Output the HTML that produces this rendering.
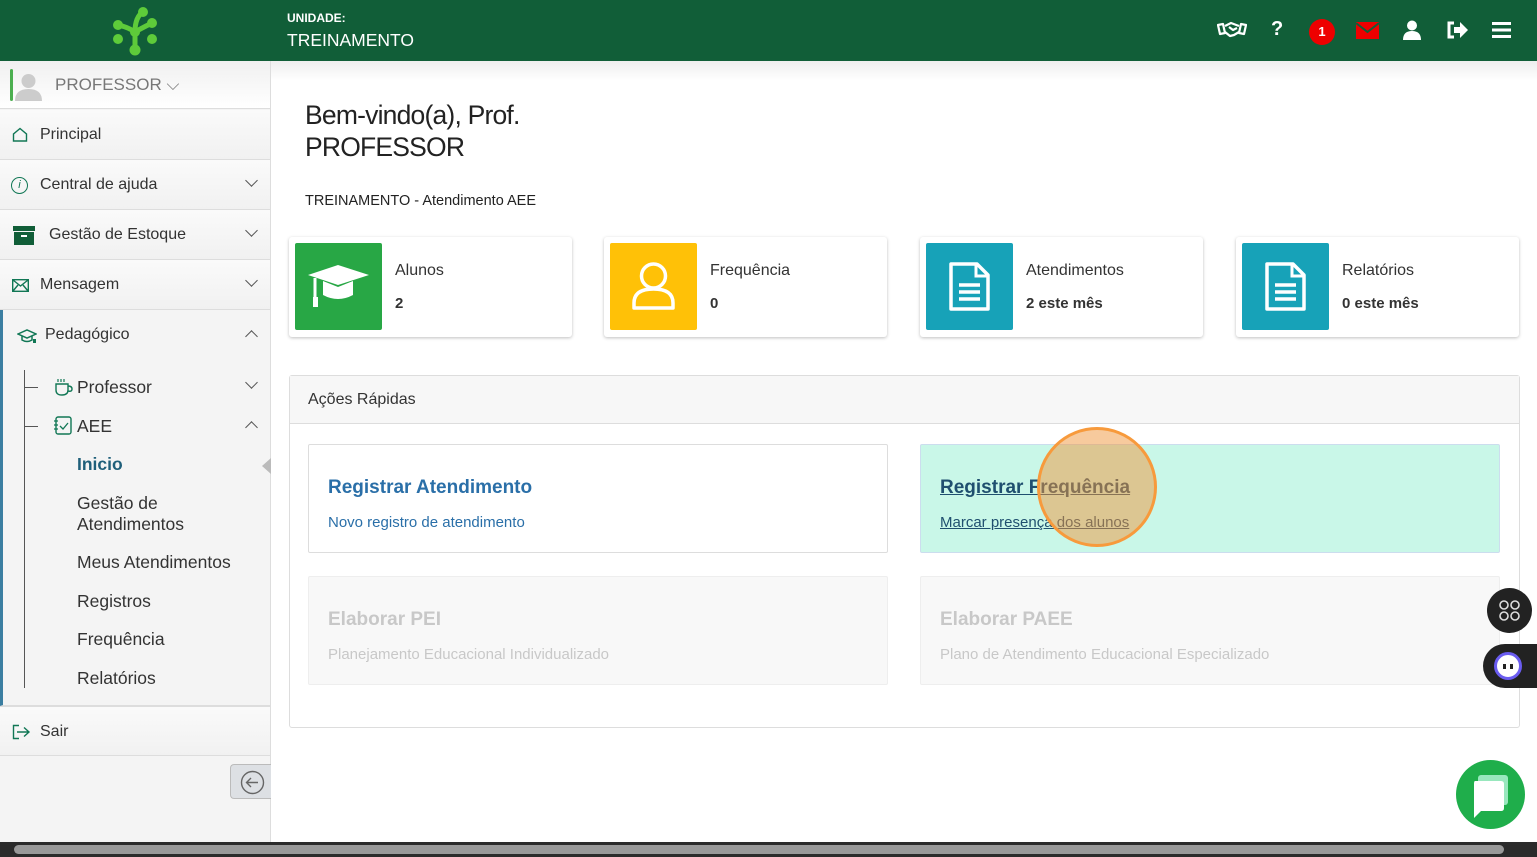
<!DOCTYPE html>
<html><head><meta charset="utf-8"><style>
*{box-sizing:border-box;margin:0;padding:0}
body{width:1537px;height:857px;overflow:hidden;position:relative;font-family:"Liberation Sans",sans-serif;background:#fff;color:#333}
.a{position:absolute}
.hdr{left:0;top:0;width:1537px;height:61px;background:#115e38}
.side{left:0;top:61px;width:271px;height:781px;background:#f4f4f4;border-right:1px solid #ddd}
.it{position:absolute;left:0;width:270px;height:50px;border-bottom:1px solid #ddd;background:linear-gradient(#fafafa,#f1f1f1);font-size:16px;color:#333}
.it span{position:absolute;top:16px}
.it svg{position:absolute}
.chev{position:absolute;right:14px;top:16px;width:9px;height:9px;border-right:1.3px solid #555;border-bottom:1.3px solid #555;transform:rotate(45deg)}
.up{transform:rotate(-135deg);top:22px}
.sub{position:absolute;left:77px;font-size:17.5px;color:#333}
.card{position:absolute;top:237px;width:283px;height:100px;background:#fff;border-radius:3px;box-shadow:0 1px 3px rgba(0,0,0,.25)}
.ico{position:absolute;left:6px;top:6px;width:87px;height:87px;border-radius:2px}
.ct{position:absolute;left:106px;top:25px;font-size:16px;color:#333}
.cv{position:absolute;left:106px;top:58px;font-size:15px;font-weight:bold;color:#333}
.qa{position:absolute;width:580px;height:109px;border:1px solid #ddd;border-radius:2px}
.qa b{position:absolute;left:19px;top:32px;font-size:19px}
.qa i{position:absolute;left:19px;top:69px;font-size:15px;font-style:normal}
</style></head><body>
<div class="a hdr">
<svg class="a" style="left:110px;top:5px" width="50" height="52" viewBox="0 0 50 52"><g stroke="#5ecb3a" stroke-width="5" fill="none" stroke-linecap="round"><path d="M33 7 Q25 12 25 27 Q25 36 25 45"/><path d="M8 20 Q18 22 25 27"/><path d="M42 18 Q30 24 25 27"/></g><g fill="#5ecb3a"><circle cx="33" cy="7" r="5"/><circle cx="8" cy="20" r="5"/><circle cx="42" cy="18" r="5"/><circle cx="8" cy="34" r="5"/><circle cx="42" cy="34" r="5"/><circle cx="25" cy="45" r="5.5"/><circle cx="25" cy="27" r="5"/></g></svg>
<div class="a" style="left:287px;top:11px;color:#fff;font-size:12px;font-weight:bold">UNIDADE:</div>
<div class="a" style="left:287px;top:30px;color:#fff;font-size:17.5px">TREINAMENTO</div>
<svg class="a" style="left:1217px;top:21px" width="30" height="18" viewBox="0 0 30 18"><g fill="none" stroke="#fff" stroke-width="2.2" stroke-linejoin="round"><path d="M1 4 L6 3 L8 12 L3 13Z"/><path d="M29 4 L24 3 L22 12 L27 13Z"/><path d="M8 5 L14 2 L22 5 M8 11 L13 15 L17 14 L22 11 M12 6 L16 9 L20 7"/></g></svg>
<div class="a" style="left:1271px;top:18px;color:#fff;font-size:20px;font-weight:bold">?</div>
<div class="a" style="left:1309px;top:19px;width:26px;height:26px;border-radius:50%;background:#e00;color:#fff;font-size:13px;font-weight:bold;text-align:center;line-height:26px">1</div>
<svg class="a" style="left:1356px;top:22px" width="23" height="17" viewBox="0 0 23 17"><rect width="23" height="17" fill="#e00"/><path d="M0 1 L11.5 10 L23 1" stroke="#115e38" stroke-width="2" fill="none"/></svg>
<svg class="a" style="left:1403px;top:20px" width="18" height="20" viewBox="0 0 18 20"><circle cx="9" cy="5.5" r="5" fill="#fff"/><path d="M0 20 Q0 11 9 11 Q18 11 18 20Z" fill="#fff"/></svg>
<svg class="a" style="left:1446px;top:21px" width="22" height="18" viewBox="0 0 22 18"><path d="M8 2H3v14h5" stroke="#fff" stroke-width="3" fill="none"/><path d="M8 6h6V1l8 8-8 8v-5H8z" fill="#fff"/></svg>
<svg class="a" style="left:1492px;top:22px" width="19" height="16"><rect y="0" width="19" height="3" fill="#fff"/><rect y="6.5" width="19" height="3" fill="#fff"/><rect y="13" width="19" height="3" fill="#fff"/></svg>
</div>

<div class="a side">
<div class="it" style="top:0;height:48px;background:linear-gradient(#f0f0f0,#fff)"><div class="a" style="left:10px;top:8px;width:3px;height:32px;background:#4caf50;border-radius:2px"></div>
<svg class="a" style="left:15px;top:11px" width="27" height="29"><circle cx="13.5" cy="9" r="7" fill="#ccc"/><path d="M0 29 Q0 17 13.5 17 Q27 17 27 29Z" fill="#ccc"/></svg>
<span style="left:55px;top:14px;color:#777;font-size:17px">PROFESSOR ⌵</span></div>
<div class="it" style="top:49px"><svg style="left:12px;top:17px" width="16" height="15"><path d="M1.5 14 V7 L8 1.5 L14.5 7 V14Z" fill="none" stroke="#175" stroke-width="1.4"/></svg><span style="left:40px">Principal</span></div>
<div class="it" style="top:99px"><span style="left:11px;top:17px;width:17px;height:17px;border:1.3px solid #175;border-radius:50%;font-size:11px;text-align:center;line-height:15px;font-style:italic;color:#175">i</span><span style="left:40px">Central de ajuda</span><div class="chev"></div></div>
<div class="it" style="top:149px"><svg style="left:13px;top:16px" width="22" height="19"><rect width="22" height="5" fill="#115e38"/><rect x="1" y="6" width="20" height="13" fill="#115e38"/><rect x="8" y="9" width="6" height="2" fill="#fff"/></svg><span style="left:49px">Gestão de Estoque</span><div class="chev"></div></div>
<div class="it" style="top:199px"><svg style="left:12px;top:19px" width="17" height="13"><rect x=".7" y=".7" width="15.6" height="11.6" fill="none" stroke="#175" stroke-width="1.4"/><path d="M1 1 L8.5 7 L16 1 M1 12 L6 6 M16 12 L11 6" fill="none" stroke="#175" stroke-width="1.4"/></svg><span style="left:40px">Mensagem</span><div class="chev"></div></div>
<div class="it" style="top:249px;height:396px;background:#f4f4f4;border-left:3px solid #3b7ea1"><svg style="left:14px;top:18px" width="20" height="16"><path d="M1 6 L10 2 L19 6 L10 10Z M5 8 V12 Q10 15 15 12 V8" fill="none" stroke="#175" stroke-width="1.5"/><rect x="16" y="11" width="3" height="4" fill="#175"/></svg><span style="left:42px">Pedagógico</span><div class="chev up"></div>
<div class="a" style="left:21px;top:60px;width:1px;height:318px;background:#555"></div>
<div class="a" style="left:21px;top:77px;width:14px;height:1px;background:#555"></div>
<div class="a" style="left:21px;top:116px;width:14px;height:1px;background:#555"></div>
<div class="chev" style="top:68px"></div><div class="chev up" style="top:113px"></div>
</div>
<svg class="a" style="left:54px;top:316px" width="20" height="19"><path d="M4 2v3M7 2v3M10 2v3" stroke="#175" stroke-width="1.2"/><path d="M2 7 H14 V13 Q14 18 8 18 Q2 18 2 13Z M14 9 Q18 9 18 12 Q18 15 14 14" fill="none" stroke="#175" stroke-width="1.4"/></svg>
<div class="sub" style="top:316px">Professor</div>
<svg class="a" style="left:54px;top:355px" width="18" height="19"><rect x="2" y="1" width="15" height="17" rx="2" fill="none" stroke="#175" stroke-width="1.4"/><path d="M0 5h4M0 9h4M0 13h4M6 10 L9 13 L14 7" fill="none" stroke="#175" stroke-width="1.3"/></svg>
<div class="sub" style="top:355px">AEE</div>
<div class="sub" style="top:393px;color:#1f5f7a;font-weight:bold">Inicio</div>
<div class="a" style="left:262px;top:397px;width:0;height:0;border-top:8px solid transparent;border-bottom:8px solid transparent;border-right:9px solid #bbb"></div>
<div class="sub" style="top:432px;line-height:21px">Gestão de<br>Atendimentos</div>
<div class="sub" style="top:491px">Meus Atendimentos</div>
<div class="sub" style="top:530px">Registros</div>
<div class="sub" style="top:568px">Frequência</div>
<div class="sub" style="top:607px">Relatórios</div>
<div class="it" style="top:645px;border-top:1px solid #ddd"><svg style="left:12px;top:17px" width="19" height="16"><path d="M7 1.5H1.5v13H7" fill="none" stroke="#175" stroke-width="1.4"/><path d="M5 8H17 M12 3.5 L17 8 L12 12.5" fill="none" stroke="#175" stroke-width="1.4"/></svg><span style="left:40px">Sair</span></div>
<div class="a" style="left:230px;top:703px;width:41px;height:35px;background:#dde0e4;border:1px solid #bbb;border-right:none;border-radius:4px 0 0 4px"><svg class="a" style="left:9px;top:5px" width="25" height="25"><circle cx="12.5" cy="12.5" r="11" fill="none" stroke="#666" stroke-width="1.4"/><path d="M18 12.5H7 M11 8 L6.5 12.5 L11 17" fill="none" stroke="#666" stroke-width="1.4"/></svg></div>
</div>

<div class="a" style="left:271px;top:61px;width:1266px;height:20px;background:linear-gradient(#eee,#fff)"></div>
<div class="a" style="left:305px;top:99px;font-size:26.5px;line-height:32px;letter-spacing:-0.8px;color:#222">Bem-vindo(a), Prof.<br>PROFESSOR</div>
<div class="a" style="left:305px;top:193px;font-size:14.5px;color:#222">TREINAMENTO - Atendimento AEE</div>

<div class="card" style="left:289px"><div class="ico" style="background:#28a745"><svg width="87" height="87" viewBox="0 0 87 87"><path d="M13 32 L43 22 L74 32 L43 42Z" fill="#fff"/><path d="M28 38 V52 Q43 60 58 52 V38 L43 44Z" fill="#fff"/><path d="M20 35 V55" stroke="#fff" stroke-width="3"/><rect x="18" y="54" width="5" height="10" fill="#fff"/></svg></div><div class="ct">Alunos</div><div class="cv">2</div></div>
<div class="card" style="left:604px"><div class="ico" style="background:#ffc107"><svg width="87" height="87" viewBox="0 0 87 87"><circle cx="43.5" cy="33" r="12" fill="none" stroke="#fff" stroke-width="3.5"/><path d="M24 65 V60 Q24 46 43.5 46 Q63 46 63 60 V65Z" fill="none" stroke="#fff" stroke-width="3.5" stroke-linejoin="round"/></svg></div><div class="ct">Frequência</div><div class="cv">0</div></div>
<div class="card" style="left:920px"><div class="ico" style="background:#17a2b8"><svg width="87" height="87" viewBox="0 0 87 87"><path d="M25 21 H51 L62 32 V66 H25Z" fill="none" stroke="#fff" stroke-width="3.5" stroke-linejoin="round"/><path d="M50 21 V33 H62" fill="none" stroke="#fff" stroke-width="3"/><path d="M33 42H54M33 49H54M33 56H54" stroke="#fff" stroke-width="3.5"/></svg></div><div class="ct">Atendimentos</div><div class="cv">2 este mês</div></div>
<div class="card" style="left:1236px"><div class="ico" style="background:#17a2b8"><svg width="87" height="87" viewBox="0 0 87 87"><path d="M25 21 H51 L62 32 V66 H25Z" fill="none" stroke="#fff" stroke-width="3.5" stroke-linejoin="round"/><path d="M50 21 V33 H62" fill="none" stroke="#fff" stroke-width="3"/><path d="M33 42H54M33 49H54M33 56H54" stroke="#fff" stroke-width="3.5"/></svg></div><div class="ct">Relatórios</div><div class="cv">0 este mês</div></div>

<div class="a" style="left:289px;top:375px;width:1231px;height:353px;border:1px solid #ddd;border-radius:3px"></div>
<div class="a" style="left:290px;top:376px;width:1229px;height:48px;background:#f7f7f7;border-bottom:1px solid #ddd"><span class="a" style="left:18px;top:15px;font-size:16px">Ações Rápidas</span></div>
<div class="qa" style="left:308px;top:444px;background:#fff"><b style="color:#2a6fa8">Registrar Atendimento</b><i style="color:#2a6fa8">Novo registro de atendimento</i></div>
<div class="qa" style="left:920px;top:444px;background:#c9f7e8;border-color:#cde"><b style="color:#1f4f6f;text-decoration:underline">Registrar Frequência</b><i style="color:#1f4f6f;text-decoration:underline">Marcar presença dos alunos</i></div>
<div class="qa" style="left:308px;top:576px;background:#f8f8f8;border-color:#eee"><b style="color:#c8c8c8">Elaborar PEI</b><i style="color:#c8c8c8">Planejamento Educacional Individualizado</i></div>
<div class="qa" style="left:920px;top:576px;background:#f8f8f8;border-color:#eee"><b style="color:#c8c8c8">Elaborar PAEE</b><i style="color:#c8c8c8">Plano de Atendimento Educacional Especializado</i></div>
<div class="a" style="left:1037px;top:427px;width:120px;height:120px;border-radius:50%;background:rgba(240,150,60,.5);border:3px solid #f79a3c"></div>

<div class="a" style="left:1487px;top:588px;width:45px;height:45px;border-radius:50%;background:#222"><svg class="a" style="left:12px;top:12px" width="21" height="21"><g fill="none" stroke="#ddd" stroke-width="1.6"><rect x="1" y="1" width="8" height="8" rx="4"/><rect x="12" y="1" width="8" height="8" rx="4"/><rect x="1" y="12" width="8" height="8" rx="4"/><rect x="12" y="12" width="8" height="8" rx="4"/></g></svg></div>
<div class="a" style="left:1483px;top:644px;width:54px;height:44px;border-radius:22px 0 0 22px;background:#222"><div class="a" style="left:11px;top:8px;width:28px;height:28px;border-radius:50%;background:#fff;border:3px solid #6a5cf0"><div class="a" style="left:6px;top:9px;width:3px;height:5px;background:#222"></div><div class="a" style="left:13px;top:9px;width:3px;height:5px;background:#222"></div></div></div>
<div class="a" style="left:1456px;top:760px;width:69px;height:69px;border-radius:50%;background:#1fae4b"><div class="a" style="left:22px;top:15px;width:30px;height:30px;background:#cfe;opacity:.7;border-radius:3px"></div><svg class="a" style="left:16px;top:21px" width="32" height="38"><path d="M3 0H29Q32 0 32 3V27Q32 30 29 30H9L2 37V3Q2 0 3 0Z" fill="#fff"/></svg></div>

<div class="a" style="left:0;top:842px;width:1537px;height:15px;background:#2b2b2b"><div class="a" style="left:14px;top:3px;width:1490px;height:9px;background:#999;border-radius:5px"></div></div>
</body></html>
